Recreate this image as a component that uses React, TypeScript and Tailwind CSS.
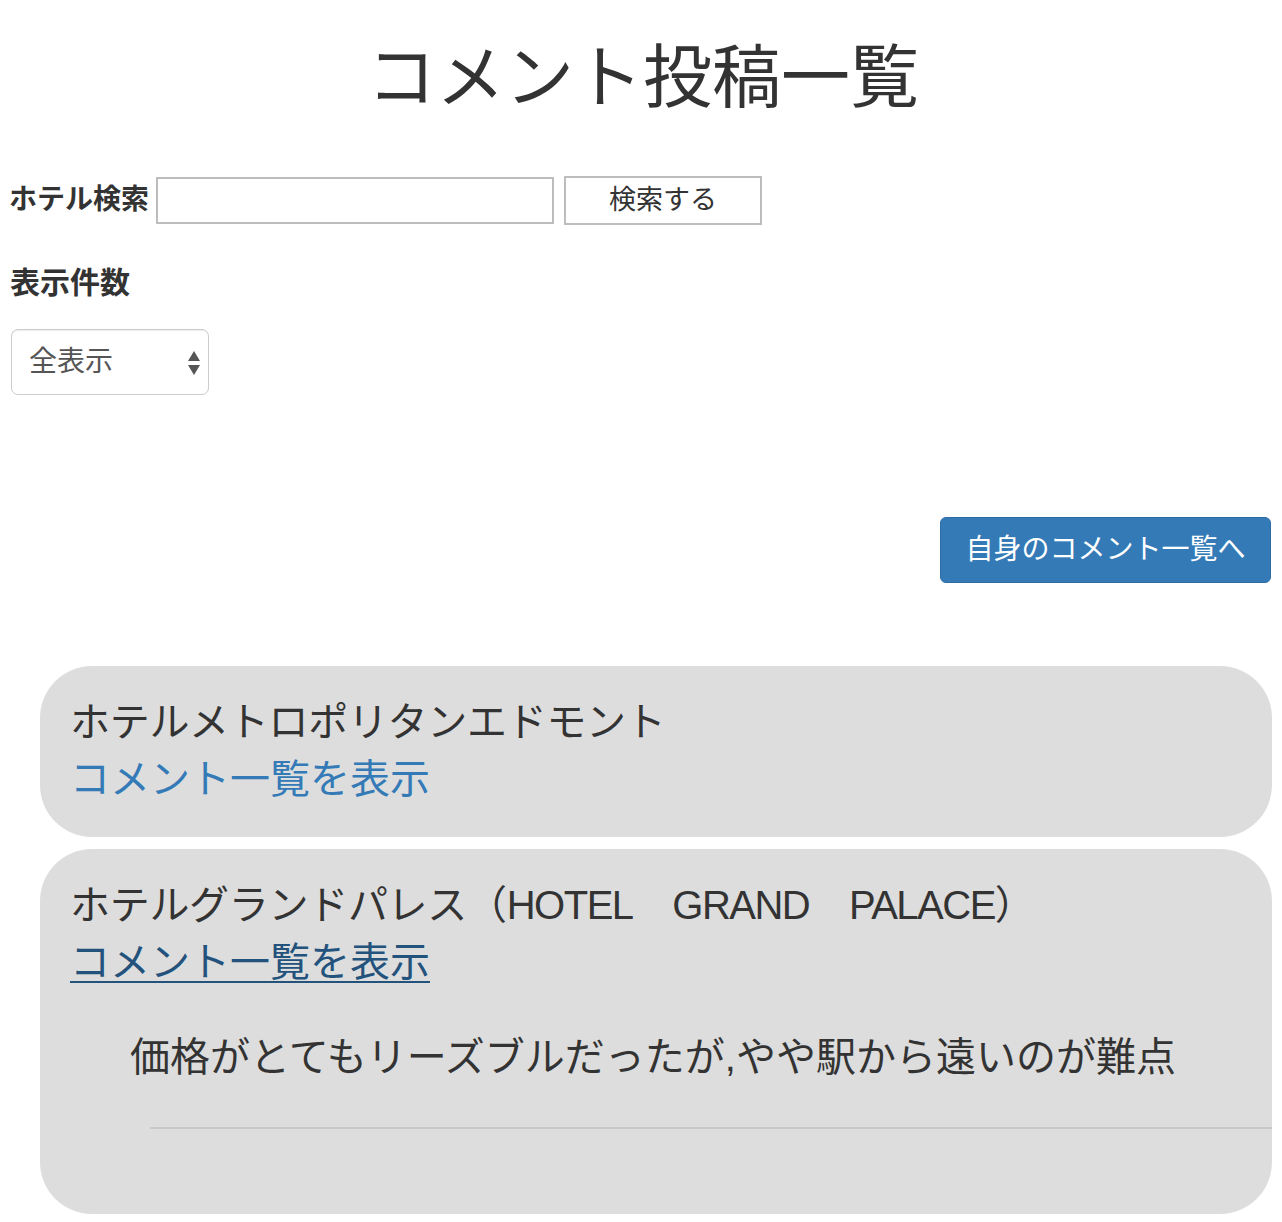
import { useState } from "react";

const hotels = [
  { id: 1, name: "ホテルメトロポリタンエドモント", latin: [] as string[], open: false, comments: [] as string[] },
  {
    id: 2,
    name: "ホテルグランドパレス",
    latin: ["HOTEL", "GRAND", "PALACE"],
    open: true,
    comments: ["価格がとてもリーズブルだったが,やや駅から遠いのが難点"],
  },
];

export default function App() {
  const [keyword, setKeyword] = useState("");
  const [limit, setLimit] = useState("all");

  return (
    <div
      className="w-[1282px] min-h-[1222px] bg-white text-[#333] pb-[9px]"
      style={{ fontFamily: '"Liberation Sans", "Noto Sans CJK JP", sans-serif' }}
    >
      {/* タイトル */}
      <h1 className="pt-[41px] pl-[4px] text-center text-[69px] leading-[1.1] font-normal">
        コメント投稿一覧
      </h1>

      {/* 検索 */}
      <div className="mt-[59px] px-[9px] flex items-center">
        <label className="text-[28px] font-bold leading-none mr-[7px]">ホテル検索</label>
        <input
          value={keyword}
          onChange={(e) => setKeyword(e.target.value)}
          className="w-[398px] h-[47px] border-2 border-[#bdbdbd] bg-white px-2 text-[24px] outline-none"
        />
        <button className="ml-[10px] w-[198px] h-[49px] border-2 border-[#bdbdbd] bg-white text-[27px] leading-none text-[#333]">
          検索する
        </button>
      </div>

      {/* 表示件数 */}
      <h4 className="mt-[41px] px-[10px] text-[30px] font-bold leading-[1.1]">表示件数</h4>
      <div className="mt-[30px] ml-[11px] relative w-[198px]">
        <select
          value={limit}
          onChange={(e) => setLimit(e.target.value)}
          className="appearance-none w-[198px] h-[66px] border border-[#ccc] rounded-[7px] bg-white pl-[17px] text-[28px] text-[#555] outline-none shadow-[inset_0_1px_1px_rgba(0,0,0,0.075)]"
        >
          <option value="all">全表示</option>
          <option value="10">10件</option>
          <option value="20">20件</option>
        </select>
        <svg
          className="absolute right-[8px] top-[21px] pointer-events-none"
          width="14"
          height="26"
          viewBox="0 0 14 26"
        >
          <path d="M7 1 L13 11 L1 11 Z" fill="#555" />
          <path d="M1 15 L13 15 L7 25 Z" fill="#555" />
        </svg>
      </div>

      {/* 自身のコメント */}
      <div className="mt-[122px] pr-[11px] flex justify-end">
        <button className="w-[331px] h-[66px] rounded-[6px] bg-[#337ab7] border border-[#2e6da4] text-white text-[28px] leading-none">
          自身のコメント一覧へ
        </button>
      </div>

      {/* ホテル一覧 */}
      <div className="mt-[83px] ml-[40px] mr-[10px] flex flex-col gap-[12px]">
        {hotels.map((h) => (
          <div
            key={h.id}
            className={`bg-[#dddddd] rounded-[52px] pl-[30px] pt-[28px] text-[40px] leading-[57px] ${
              h.open ? "pb-[85px]" : "pb-[29px]"
            }`}
          >
            <div className="tracking-[-0.3px]">
              {h.name}
              {h.latin.length > 0 && (
                <>
                  （
                  {h.latin.map((w, i) => (
                    <span key={w}>
                      {i > 0 && "　"}
                      <span className="tracking-[-1.5px]">{w}</span>
                    </span>
                  ))}
                  ）
                </>
              )}
            </div>
            <a
              href="#"
              className={
                h.open
                  ? "text-[#23527c] underline underline-offset-[5px] decoration-[2px]"
                  : "text-[#337ab7] no-underline"
              }
            >
              コメント一覧を表示
            </a>
            {h.open &&
              h.comments.map((c, i) => (
                <div key={i}>
                  <p className="mt-[38px] pl-[60px]">{c}</p>
                  <hr className="mt-[41px] ml-[80px] border-0 border-t-2 border-[#c9c9c9]" />
                </div>
              ))}
          </div>
        ))}
      </div>
    </div>
  );
}
